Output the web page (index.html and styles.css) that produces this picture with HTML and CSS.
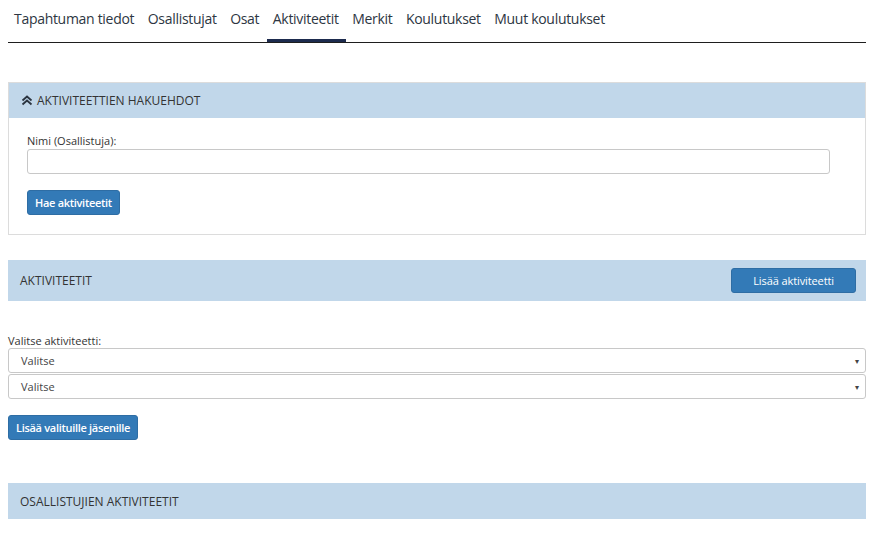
FILE: index.html
```html
<!DOCTYPE html>
<html lang="fi">
<head>
<meta charset="utf-8">
<title>Aktiviteetit</title>
<link rel="stylesheet" href="styles.css">
</head>
<body>
<div class="page">
  <nav class="tabs">
    <a class="tab">Tapahtuman tiedot</a>
    <a class="tab">Osallistujat</a>
    <a class="tab">Osat</a>
    <a class="tab active">Aktiviteetit</a>
    <a class="tab">Merkit</a>
    <a class="tab">Koulutukset</a>
    <a class="tab">Muut koulutukset</a>
  </nav>

  <section class="panel search">
    <div class="panel-head">
      <svg class="chev" width="12" height="11" viewBox="0 0 12 11"><path d="M1.5 5.5 L6 1.5 L10.5 5.5 M1.5 9.5 L6 5.5 L10.5 9.5" fill="none" stroke="#2b3440" stroke-width="1.8"/></svg>
      <span>AKTIVITEETTIEN HAKUEHDOT</span>
    </div>
    <div class="panel-body">
      <label class="label">Nimi (Osallistuja):</label>
      <div class="input"></div>
      <button class="btn btn-small">Hae aktiviteetit</button>
    </div>
  </section>

  <section class="bar bar-actions">
    <span>AKTIVITEETIT</span>
    <button class="btn btn-wide">Lisää aktiviteetti</button>
  </section>

  <div class="select-block">
    <label class="label">Valitse aktiviteetti:</label>
    <div class="select"><span>Valitse</span><span class="caret">▾</span></div>
    <div class="select"><span>Valitse</span><span class="caret">▾</span></div>
    <button class="btn btn-small btn-add">Lisää valituille jäsenille</button>
  </div>

  <section class="bar bar-last">
    <span>OSALLISTUJIEN AKTIVITEETIT</span>
  </section>
</div>
</body>
</html>
```

FILE: styles.css
```css
* { box-sizing: border-box; }
body {
  margin: 0;
  background: #fff;
  font-family: "Open Sans", "Noto Sans", sans-serif;
  color: #333;
}
.page {
  padding: 0 10px 0 8px;
}
.tabs {
  display: flex;
  height: 43px;
  border-bottom: 1px solid #1e1e1e;
}
.tab {
  display: block;
  height: 42px;
  padding: 0 7.5px 0 6px;
  line-height: 38px;
  font-size: 14px;
  color: #2d3642;
  letter-spacing: -0.3px;
}
.tab.active {
  box-shadow: inset 0 -3px 0 #1d2b4e;
}
.panel {
  margin-top: 39px;
  border: 1px solid #dcdcdc;
}
.panel-head {
  height: 35px;
  background: #c1d7ea;
  display: flex;
  align-items: center;
  gap: 4px;
  padding-left: 12px;
  font-size: 12px;
  color: #333;
}
.chev { display: block; }
.panel-body {
  padding: 15px 35px 19px 18px;
  display: flex;
  flex-direction: column;
  align-items: flex-start;
}
.label {
  display: block;
  font-size: 11px;
  line-height: 15px;
  color: #333;
}
.input {
  margin-top: 1px;
  width: 100%;
  height: 25px;
  border: 1px solid #c8c8c8;
  border-radius: 3px;
  background: #fff;
}
.btn {
  font-family: "Open Sans", "Noto Sans", sans-serif;
  background: #337ab7;
  border: 1px solid #2e6da4;
  border-radius: 3px;
  color: #fff;
  height: 25px;
  cursor: pointer;
}
.btn-small {
  margin-top: 16px;
  font-size: 11px;
  font-weight: 600;
  padding: 0 7px;
  letter-spacing: -0.3px;
}
.bar {
  background: #c1d7ea;
  display: flex;
  align-items: center;
  font-size: 12px;
  color: #333;
  padding-left: 12px;
}
.bar-actions {
  margin-top: 25px;
  height: 41px;
  justify-content: space-between;
  padding-right: 10px;
}
.btn-wide {
  font-size: 11px;
  padding: 0 21px;
  margin-top: 0;
  letter-spacing: -0.1px;
}
.select-block {
  margin-top: 32px;
  display: flex;
  flex-direction: column;
  align-items: flex-start;
}
.select {
  width: 100%;
  height: 25px;
  margin-bottom: 1px;
  border: 1px solid #c8c8c8;
  border-radius: 3px;
  display: flex;
  align-items: center;
  justify-content: space-between;
  padding: 0 6px 0 12px;
  font-size: 11px;
  color: #444;
}
.caret {
  font-size: 8px;
  color: #444;
}
.btn-add {
  margin-top: 15px;
  padding: 0 7px;
}
.bar-last {
  margin-top: 43px;
  height: 36px;
}
```
